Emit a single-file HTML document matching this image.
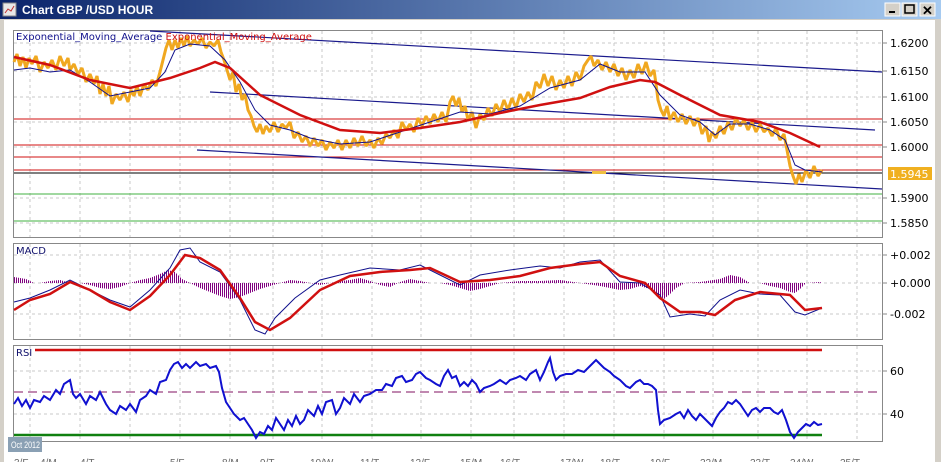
<!DOCTYPE html>
<html><head><meta charset="utf-8"><style>
body{margin:0;width:941px;height:462px;overflow:hidden;background:#fff;font-family:"Liberation Sans",sans-serif}
.t{font-family:"DejaVu Sans","Liberation Sans",sans-serif;font-size:11px;fill:#000}
</style></head><body>
<svg width="941" height="462" viewBox="0 0 941 462" xmlns="http://www.w3.org/2000/svg">
<defs><linearGradient id="tb" x1="0" y1="0" x2="1" y2="0"><stop offset="0" stop-color="#0a246a"/><stop offset="1" stop-color="#a6caf0"/></linearGradient>
<pattern id="hp" width="2" height="4" patternUnits="userSpaceOnUse"><rect x="0" y="0" width="1" height="4" fill="#800080"/></pattern></defs>
<rect x="0" y="0" width="941" height="462" fill="#d4d0c8"/>
<rect x="0" y="0" width="941" height="19" fill="url(#tb)"/>
<rect x="3" y="3" width="13" height="13" fill="#e8e8e8" stroke="#888"/>
<polyline points="5,13 8,9 11,11 14,6" fill="none" stroke="#c03030" stroke-width="1"/>
<text x="22" y="14" font-family="Liberation Sans" font-size="12" font-weight="bold" fill="#fff">Chart GBP /USD  HOUR</text>
<g fill="#d4d0c8" stroke="#fff"><rect x="885" y="3" width="15" height="13"/><rect x="902" y="3" width="15" height="13"/><rect x="920" y="3" width="15" height="13"/></g>
<rect x="889" y="11" width="6" height="2" fill="#000"/><rect x="905" y="5" width="9" height="8" fill="none" stroke="#000" stroke-width="1.5"/>
<text x="922" y="15" font-size="13" font-weight="bold">✕</text>
<rect x="4" y="20" width="931" height="442" fill="#fff"/>
<g fill="none" stroke="#888"><rect x="13.5" y="30.5" width="869" height="207"/><rect x="13.5" y="243.5" width="869" height="96"/><rect x="13.5" y="345.5" width="869" height="96"/></g>
<g stroke="#c8c8c8" stroke-dasharray="3,3">
<path d="M30 31V237M80 31V237M130 31V237M180 31V237M230 31V237M273 31V237M322 31V237M372 31V237M421 31V237M471 31V237M514 31V237M564 31V237M614 31V237M664 31V237M713 31V237M758 31V237M807 31V237M857 31V237"/>
<path d="M30 244V339M80 244V339M130 244V339M180 244V339M230 244V339M273 244V339M322 244V339M372 244V339M421 244V339M471 244V339M514 244V339M564 244V339M614 244V339M664 244V339M713 244V339M758 244V339M807 244V339M857 244V339"/>
<path d="M30 346V441M80 346V441M130 346V441M180 346V441M230 346V441M273 346V441M322 346V441M372 346V441M421 346V441M471 346V441M514 346V441M564 346V441M614 346V441M664 346V441M713 346V441M758 346V441M807 346V441M857 346V441"/>
<path d="M14 43H882M14 71H882M14 97H882M14 122H882M14 147H882M14 198H882M14 223H882M14 255H882M14 283H882M14 314H882M14 371H882M14 414H882"/>
</g>
<g stroke-width="1"><path d="M14 119H882M14 145H882M14 157H882M14 170H882" stroke="#d01010"/><path d="M14 173H882" stroke="#000"/><path d="M14 194H882M14 221H882" stroke="#40b040"/></g>
<g stroke="#1a1a8c" stroke-width="1.2" fill="none"><path d="M150 31L882 72"/><path d="M210 92L875 130"/><path d="M197 150L882 189"/></g>
<polyline fill="none" stroke="#f0a820" stroke-width="3" stroke-linejoin="bevel" points="14,62 17,54 20,66 23,57 26,68 29,58 32,64 36,56 40,72 44,62 48,68 52,60 56,70 60,56 64,66 68,58 70,70 74,64 78,74 82,68 86,82 90,74 94,84 97,76 100,94 103,84 106,96 109,86 112,104 116,94 120,100 124,92 128,102 131,90 134,96 137,86 140,96 144,84 148,90 152,80 156,86 160,72 163,60 166,48 169,40 172,50 175,40 178,48 181,38 184,46 187,36 190,46 194,40 198,44 202,38 206,48 210,42 214,46 218,40 221,52 224,60 227,70 230,80 233,72 236,92 239,84 242,100 245,94 248,110 251,116 254,126 257,132 260,124 263,134 266,126 270,132 274,122 278,132 282,124 286,128 290,122 294,138 298,132 302,142 306,136 310,146 314,138 318,146 322,140 326,150 330,142 334,148 338,140 342,150 346,140 350,148 354,138 358,146 362,136 366,146 370,140 374,148 378,138 382,144 386,134 390,138 394,130 398,138 402,122 406,130 410,124 414,132 418,118 422,126 426,116 430,124 434,114 438,122 442,112 446,122 450,102 453,96 456,106 459,98 462,112 465,106 468,120 472,112 476,128 480,114 484,120 488,108 492,116 496,104 500,112 504,100 508,110 512,98 516,108 520,94 524,102 528,92 532,100 536,82 540,88 544,74 548,86 552,76 556,90 560,80 564,88 568,76 572,86 576,72 580,80 584,66 588,60 591,56 594,66 598,60 602,70 606,62 610,72 614,64 618,76 622,68 626,80 630,70 634,78 638,64 642,74 646,62 650,76 654,70 656,84 658,100 661,110 664,116 667,106 670,120 674,112 678,122 682,114 686,124 690,116 694,126 698,118 702,134 706,126 709,142 712,132 716,138 720,126 724,134 728,122 732,130 736,118 740,126 744,120 748,130 752,122 756,132 760,124 764,132 768,128 772,136 776,128 780,140 784,134 787,150 790,166 793,176 796,184 799,174 802,182 806,170 810,178 814,166 818,176 822,170"/>
<polyline fill="none" stroke="#10108c" stroke-width="1" points="14,70 30,68 50,72 70,70 90,82 110,96 130,92 150,88 165,72 175,50 190,44 210,46 225,60 240,82 255,110 270,125 290,130 310,138 340,144 370,142 400,132 430,122 460,112 490,114 520,106 550,88 580,80 600,64 620,72 645,72 660,95 680,115 700,122 715,135 730,124 750,124 770,130 785,140 795,165 805,170 822,172"/>
<polyline fill="none" stroke="#d01010" stroke-width="2.5" points="14,57 50,65 90,80 130,88 170,78 200,68 215,62 230,68 260,95 300,115 340,130 380,133 420,128 460,122 500,113 540,105 580,98 610,87 640,80 655,82 680,95 720,115 760,122 790,133 820,147"/>
<rect x="592" y="171" width="14" height="3" fill="#f0c040"/>
<!-- MACD histogram envelope -->
<path fill="url(#hp)" d="M14,283 L14,277 26,279 34,283 40,283 50,281 60,280 70,283 80,283 90,285 100,288 110,289 120,287 130,283 140,280 150,278 160,274 168,270 175,272 182,279 190,283 200,288 210,292 220,296 230,299 240,297 250,293 260,289 270,286 280,283 290,280 300,281 310,283 320,285 330,283 340,281 350,280 360,278 370,281 380,285 390,287 400,282 410,279 420,281 430,283 440,283 450,285 460,288 470,291 480,289 490,286 500,283 520,281 540,281 560,280 580,283 600,286 610,288 620,290 630,289 640,286 650,289 658,295 664,299 670,294 676,288 685,283 700,282 720,279 730,275 740,277 750,283 760,283 770,286 780,288 790,292 795,293 800,289 806,283 820,282 822,283 Z"/>
<polyline fill="none" stroke="#10108c" stroke-width="1" points="14,302 30,298 50,290 70,280 90,290 110,300 130,307 150,290 170,268 180,250 190,248 200,262 220,272 240,300 255,330 265,334 275,318 295,298 320,280 340,275 370,268 400,270 420,265 440,275 460,285 480,275 510,270 540,266 560,268 580,262 600,260 620,282 640,283 660,295 670,317 690,314 705,316 720,300 740,290 760,294 780,295 795,312 805,315 822,308"/>
<polyline fill="none" stroke="#d01010" stroke-width="2.5" points="14,310 30,300 50,294 70,282 90,290 110,302 130,310 150,296 170,275 185,255 200,258 220,270 240,298 255,322 270,330 290,318 320,290 350,276 380,272 410,270 430,268 460,282 490,280 520,276 550,268 580,264 600,262 620,276 645,283 660,298 680,312 700,312 715,315 735,300 760,292 790,295 805,310 822,308"/>
<path d="M35 350H822" stroke="#d01010" stroke-width="2.5"/>
<path d="M14 392H882" stroke="#801060" stroke-width="1" stroke-dasharray="9,5"/>
<path d="M14 435H822" stroke="#108010" stroke-width="2.5"/>
<polyline fill="none" stroke="#1010d0" stroke-width="2" points="14,404 18,398 22,406 26,400 30,408 34,400 40,402 44,396 50,400 56,390 60,394 64,384 70,380 73,394 76,398 80,394 86,404 90,396 96,400 100,392 106,404 110,410 116,414 120,406 126,410 130,404 136,412 140,400 146,396 150,390 156,394 160,382 166,380 170,370 174,364 178,362 182,368 186,364 190,368 196,362 200,366 206,364 210,368 216,366 219,372 222,388 226,402 230,408 234,414 240,420 244,418 248,424 252,430 256,438 260,432 264,434 268,426 272,430 276,418 280,424 284,430 288,420 292,426 296,416 300,424 304,420 308,410 314,416 318,406 322,414 326,402 332,400 336,414 340,408 344,398 350,404 354,394 360,402 364,396 370,394 376,390 382,390 386,384 392,386 396,378 402,376 406,382 412,380 416,374 420,372 426,378 430,380 436,384 440,386 444,376 448,370 452,378 456,376 460,386 464,382 468,386 472,380 476,384 480,392 484,388 490,386 494,384 500,380 506,384 510,380 516,378 520,376 526,380 530,374 536,370 540,380 544,372 548,362 550,358 553,372 556,380 560,376 566,374 572,374 578,370 584,372 590,366 596,360 600,364 604,368 610,372 614,376 620,380 626,386 630,388 636,382 640,380 644,384 648,384 652,386 656,390 658,410 660,424 664,420 670,418 676,414 680,412 684,418 688,410 692,416 696,420 700,414 704,418 708,422 712,426 716,418 720,412 724,408 728,402 732,404 736,400 740,404 744,410 748,416 752,410 756,408 760,412 764,408 770,408 774,412 778,414 782,410 786,420 790,432 794,438 798,432 802,428 806,424 810,426 814,422 818,425 822,424"/>
<g class="t"><path d="M882 43h5M882 71h5M882 97h5M882 122h5M882 147h5M882 198h5M882 223h5M882 255h5M882 283h5M882 314h5M882 371h5M882 414h5" stroke="#888"/>
<text x="890" y="47">1.6200</text><text x="890" y="75">1.6150</text><text x="890" y="101">1.6100</text><text x="890" y="126">1.6050</text><text x="890" y="151">1.6000</text>
<rect x="888" y="167" width="44" height="13" fill="#f0b020"/><text x="890" y="178" fill="#fff">1.5945</text>
<text x="890" y="202">1.5900</text><text x="890" y="227">1.5850</text>
<text x="890" y="259">+0.002</text><text x="890" y="287">+0.000</text><text x="890" y="318">-0.002</text>
<text x="890" y="375">60</text><text x="890" y="418">40</text></g>
<text x="16" y="40" font-family="DejaVu Sans" font-size="10" fill="#10108c">Exponential_Moving_Average <tspan fill="#d01010">Exponential_Moving_Average</tspan></text>
<text x="16" y="254" font-family="DejaVu Sans" font-size="10" fill="#10106c">MACD</text>
<text x="16" y="356" font-family="DejaVu Sans" font-size="10" fill="#10106c">RSI</text>
<rect x="8" y="437" width="34" height="15" fill="#8aa0b4"/>
<text x="11" y="448" font-size="9" fill="#fff" textLength="29" lengthAdjust="spacingAndGlyphs">Oct 2012</text>
<g font-size="10" fill="#666"><text x="14" y="466">3/F</text><text x="40" y="466">4/M</text><text x="80" y="466">4/T</text><text x="170" y="466">5/F</text><text x="222" y="466">8/M</text><text x="260" y="466">9/T</text><text x="310" y="466">10/W</text><text x="360" y="466">11/T</text><text x="410" y="466">12/F</text><text x="460" y="466">15/M</text><text x="500" y="466">16/T</text><text x="560" y="466">17/W</text><text x="600" y="466">18/T</text><text x="650" y="466">19/F</text><text x="700" y="466">22/M</text><text x="750" y="466">23/T</text><text x="790" y="466">24/W</text><text x="840" y="466">25/T</text></g>
</svg>
</body></html>
